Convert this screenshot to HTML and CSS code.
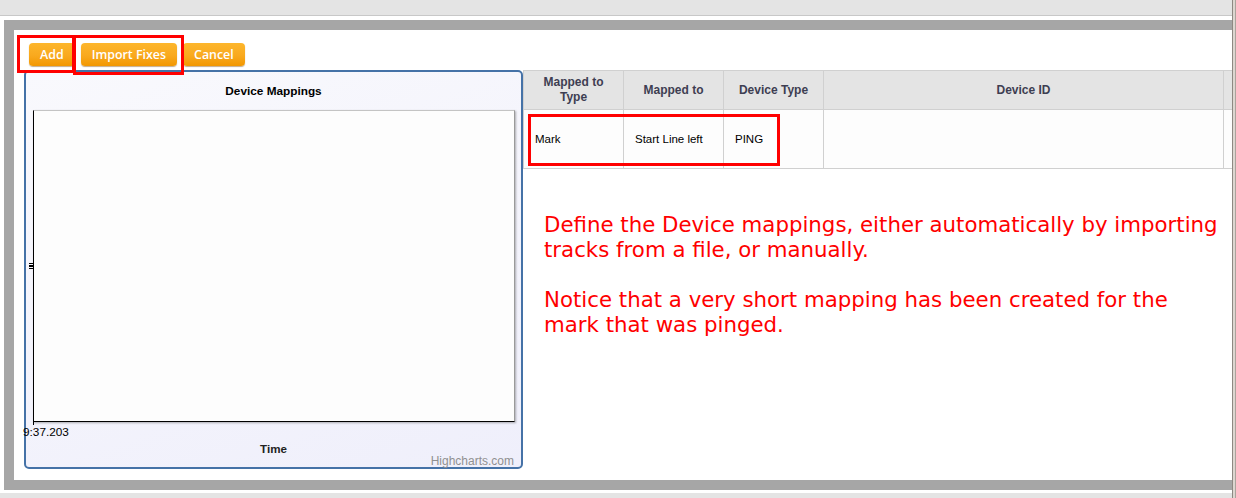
FILE: index.html
```html
<!DOCTYPE html>
<html>
<head>
<meta charset="utf-8">
<title>Device Mappings</title>
<link rel="stylesheet" href="styles.css">
</head>
<body>
<div class="page">
  <div class="main">
    <div class="topbar"></div>
    <div class="frame-wrap">
      <div class="frame">
        <div class="toolbar">
          <button class="btn">Add</button>
          <button class="btn">Import Fixes</button>
          <button class="btn">Cancel</button>
        </div>
        <div class="workspace">
          <div class="chart">
            <div class="chart-title">Device Mappings</div>
            <div class="plot">
              <span class="ytick"></span>
              <span class="xtick"></span>
            </div>
            <div class="xlabel">9:37.203</div>
            <div class="xtitle">Time</div>
            <div class="credits">Highcharts.com</div>
          </div>
          <div class="side">
            <div class="table-wrap">
              <table class="grid">
                <colgroup>
                  <col class="c100"><col class="c100"><col class="c100"><col class="c400"><col class="c100">
                </colgroup>
                <thead>
                  <tr>
                    <th>Mapped to<br>Type</th>
                    <th>Mapped to</th>
                    <th>Device Type</th>
                    <th>Device ID</th>
                    <th></th>
                  </tr>
                </thead>
                <tbody>
                  <tr>
                    <td>Mark</td>
                    <td>Start Line left</td>
                    <td>PING</td>
                    <td></td>
                    <td></td>
                  </tr>
                </tbody>
              </table>
            </div>
            <p class="note">Define the Device mappings, either automatically by importing<br>tracks from a file, or manually.<br><br>Notice that a very short mapping has been created for the<br>mark that was pinged.</p>
          </div>
        </div>
      </div>
    </div>
    <div class="bottombar"></div>
  </div>
  <div class="edge"></div>
  <div class="mark mark-add"></div>
  <div class="mark mark-import"></div>
  <div class="mark mark-row"></div>
</div>
</body>
</html>
```

FILE: styles.css
```css
* { box-sizing: border-box; }

html, body {
  margin: 0;
  padding: 0;
  background: #ffffff;
}

body {
  font-family: "Liberation Sans", Arial, sans-serif;
  width: 1236px;
  height: 498px;
  overflow: hidden;
}

.page {
  position: relative;
  display: flex;
  width: 1236px;
  height: 498px;
}

.main {
  width: 1232px;
  display: flex;
  flex-direction: column;
}

.topbar {
  height: 16px;
  background: #e4e4e4;
  border-bottom: 1px solid #c8c8c8;
}

.frame-wrap {
  padding: 4px 0 3px 4px;
  background: #ffffff;
}

.frame {
  height: 470px;
  border: 10px solid #a6a6a6;
  border-right: none;
  background: #ffffff;
  overflow: hidden;
  padding-top: 13px;
}

.bottombar {
  flex: 1;
  background: #e4e4e4;
}

.edge {
  width: 4px;
  background: #dcd6d0;
  border-left: 1px solid #8e8882;
  border-right: 1px solid #aaa39c;
}

/* toolbar */
.toolbar {
  display: flex;
  gap: 6px;
  padding-left: 15px;
}

.btn {
  height: 23px;
  padding: 0 11px;
  border: none;
  border-radius: 4px;
  background: linear-gradient(#fdb62c, #f9a91e 55%, #f29700);
  box-shadow: 0 1px 1px rgba(120, 70, 0, 0.45);
  color: #ffffff;
  font-family: "Open Sans", "Liberation Sans", sans-serif;
  font-weight: 600;
  font-size: 12.4px;
  line-height: 23px;
  cursor: pointer;
}

/* main area */
.workspace {
  display: flex;
  margin-top: 4px;
  padding-left: 10px;
}

.chart {
  position: relative;
  flex: none;
  width: 499px;
  height: 399px;
  border: 2px solid #4572a7;
  border-radius: 5px;
  background: linear-gradient(160deg, #f9f9fd, #efeffb);
  display: flex;
  flex-direction: column;
}

.chart-title {
  margin-top: 12px;
  line-height: 14px;
  font-size: 11.8px;
  font-weight: bold;
  text-align: center;
  color: #000;
}

.plot {
  position: relative;
  margin: 12px 0 0 7px;
  width: 482px;
  height: 312px;
  background: #fdfdfd;
  border-top: 1px solid #c4c4c4;
  border-left: 1px solid #000;
  border-bottom: 1px solid #000;
  border-right: 1px solid #9a9a9a;
  box-shadow: 1px 1px 2px rgba(0, 0, 0, 0.3);
}

.ytick {
  position: absolute;
  left: -5px;
  top: 152px;
  width: 4px;
  height: 6px;
  background: linear-gradient(#000 0 1.2px, transparent 1.2px 2.4px, #000 2.4px 3.6px, transparent 3.6px 4.8px, #000 4.8px 6px);
}

.xtick {
  position: absolute;
  left: -1px;
  bottom: -4px;
  width: 1px;
  height: 3px;
  background: #000;
}

.xlabel {
  margin: 3px 0 0 -3px;
  line-height: 14px;
  font-size: 11.8px;
  color: #000;
}

.xtitle {
  margin-top: 3px;
  line-height: 14px;
  font-size: 11.6px;
  font-weight: bold;
  text-align: center;
  color: #222;
}

.credits {
  position: absolute;
  right: 7px;
  top: 382px;
  line-height: 14px;
  font-size: 12px;
  color: #909090;
}

/* right side */
.side {
  flex: 1;
  min-width: 0;
}

.table-wrap {
  overflow: hidden;
}

.grid {
  border-collapse: collapse;
  table-layout: fixed;
  width: 800px;
}

.c100 { width: 100px; }
.c400 { width: 400px; }

.grid th {
  height: 39px;
  padding: 0 4px;
  background: #e4e4e4;
  border: 1px solid #d0d0d0;
  font-size: 12px;
  line-height: 15px;
  font-weight: bold;
  color: #3e3e52;
  text-align: center;
  vertical-align: middle;
}

.grid td {
  height: 59px;
  padding: 0 0 0 11px;
  background: #fdfdfd;
  border: 1px solid #d0d0d0;
  font-size: 11.5px;
  color: #000;
  vertical-align: middle;
  white-space: nowrap;
}

.note {
  margin: 43px 0 0 21px;
  font-family: "DejaVu Sans", Verdana, sans-serif;
  font-size: 21.3px;
  line-height: 25px;
  color: #ff0000;
  white-space: nowrap;
}

/* annotation boxes */
.mark {
  position: absolute;
  border: 3px solid #ff0000;
}

.mark-add {
  left: 17px;
  top: 35px;
  width: 58px;
  height: 38px;
}

.mark-import {
  left: 73px;
  top: 35px;
  width: 111px;
  height: 40px;
}

.mark-row {
  left: 528px;
  top: 114px;
  width: 252px;
  height: 52px;
}
```
